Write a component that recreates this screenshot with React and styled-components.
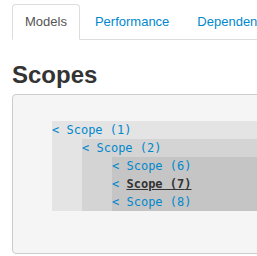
import React from 'react';
import styled, { createGlobalStyle } from 'styled-components';

const GlobalStyle = createGlobalStyle`
    html, body {
        margin: 0;
        padding: 0;
        overflow: hidden;
        background: #fff;
    }
    body {
        font-family: "Liberation Sans", Arial, sans-serif;
        color: #333;
    }
`;

const Page = styled.div`
    width: 420px;
    padding: 4px 0 0 12px;
`;

const Tabs = styled.ul`
    display: flex;
    margin: 0;
    padding: 0;
    list-style: none;
    border-bottom: 1px solid #ddd;
`;

const Tab = styled.li`
    margin-right: 2px;
    margin-bottom: -1px;
    a {
        display: block;
        height: 34px;
        line-height: 34px;
        padding: 0 12px;
        font-size: 13px;
        text-decoration: none;
        white-space: nowrap;
        border: 1px solid ${(p) => (p.active ? '#ddd' : 'transparent')};
        border-bottom-color: ${(p) => (p.active ? '#fff' : 'transparent')};
        border-radius: 4px 4px 0 0;
        background: ${(p) => (p.active ? '#fff' : 'transparent')};
        color: ${(p) => (p.active ? '#555' : '#0088cc')};
    }
`;

const Heading = styled.h3`
    margin: 22px 0 6px;
    font-size: 24px;
    line-height: 1.1;
    font-weight: bold;
    color: #333;
`;

const Pre = styled.div`
    box-sizing: border-box;
    height: 160px;
    padding: 26px 0 0 39px;
    background: #f5f5f5;
    border: 1px solid #ccc;
    border-radius: 4px;
    font-family: "DejaVu Sans Mono", "Liberation Mono", monospace;
    font-size: 12px;
    line-height: 18px;
`;

const ScopeBox = styled.div`
    background: rgba(0, 0, 0, 0.065);
    & & {
        margin-left: 30px;
    }
`;

const Line = styled.div`
    white-space: pre;
    height: 18px;
    a {
        color: #0088cc;
        text-decoration: none;
    }
`;

const Current = styled.a`
    && {
        color: #333;
        font-weight: bold;
        text-decoration: underline;
    }
`;

const ScopeLine = ({ n, current }) => (
    <Line>
        <a href="#">&lt;</a>{' '}
        {current ? <Current href="#">Scope ({n})</Current> : <a href="#">Scope ({n})</a>}
    </Line>
);

const App = () => (
    <Page>
        <GlobalStyle />
        <Tabs>
            <Tab active><a href="#">Models</a></Tab>
            <Tab><a href="#">Performance</a></Tab>
            <Tab><a href="#">Dependencies</a></Tab>
        </Tabs>
        <Heading>Scopes</Heading>
        <Pre>
            <ScopeBox>
                <ScopeLine n={1} />
                <ScopeBox>
                    <ScopeLine n={2} />
                    <ScopeBox>
                        <ScopeLine n={6} />
                        <ScopeLine n={7} current />
                        <ScopeLine n={8} />
                    </ScopeBox>
                </ScopeBox>
            </ScopeBox>
        </Pre>
    </Page>
);

export default App;
